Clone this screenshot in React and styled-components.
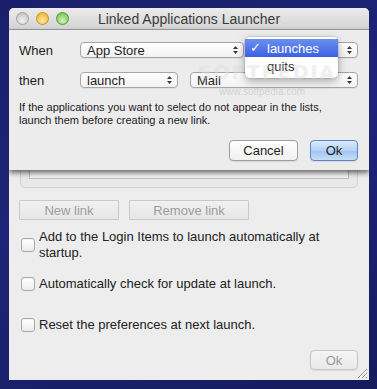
import React from "react";
import styled, { createGlobalStyle } from "styled-components";

const Global = createGlobalStyle`
  html, body { margin: 0; padding: 0; }
  body {
    width: 377px;
    height: 389px;
    overflow: hidden;
    background: #1b2070;
    font-family: "Liberation Sans", Arial, sans-serif;
  }
`;

const Desktop = styled.div`
  width: 377px;
  height: 389px;
  box-sizing: border-box;
  padding: 8px 8px 0 9px;
  background: linear-gradient(160deg, #1a1f6a 0%, #1e2578 45%, #161b5c 100%);
`;

const Window = styled.div`
  position: relative;
  width: 360px;
  height: 372px;
  background: #ededed;
  border-radius: 5px 5px 0 0;
  overflow: hidden;
  display: flex;
  flex-direction: column;
`;

const TitleBar = styled.div`
  flex: none;
  height: 21px;
  display: grid;
  grid-template-columns: 1fr auto 1fr;
  align-items: center;
  background: linear-gradient(#ececec, #d3d3d3);
  border-bottom: 1px solid #9b9b9b;
`;

const Lights = styled.div`
  display: flex;
  gap: 7px;
  padding-left: 7px;
`;

const lightColors = {
  gray: ["#f2f2f2", "#c8c8c8", "#a2a2a2"],
  yellow: ["#fde9a8", "#f3b93a", "#c98f24"],
  green: ["#d3f2bd", "#7fcb5c", "#4f9a3a"],
};

const Light = styled.span`
  box-sizing: border-box;
  width: 13px;
  height: 13px;
  border-radius: 50%;
  border: 1px solid ${(p) => lightColors[p.$c][2]};
  background: radial-gradient(circle at 50% 70%, ${(p) => lightColors[p.$c][0]} 0%, ${(p) => lightColors[p.$c][1]} 75%);
`;

const Title = styled.div`
  font-size: 14px;
  color: #3b3b3b;
  white-space: nowrap;
`;

const Content = styled.div`
  flex: 1;
  display: flex;
  flex-direction: column;
  padding: 11px 11px 10px 10px;
`;

const GroupBox = styled.div`
  box-sizing: border-box;
  margin-left: 1px;
  width: 338px;
  height: 147px;
  border: 1px solid #d0d0d0;
  border-radius: 5px;
  background: #e9e9e9;
  padding: 8px;
  display: flex;
`;

const Table = styled.div`
  flex: 1;
  border: 1px solid #bdbdbd;
  background: #f3f3f3;
`;

const ButtonRow = styled.div`
  display: flex;
  gap: 10px;
  margin-top: 12px;
`;

const FlatButton = styled.div`
  box-sizing: border-box;
  width: ${(p) => p.$w}px;
  height: 20px;
  display: flex;
  align-items: center;
  justify-content: center;
  border: 1px solid #c9c9c9;
  border-radius: 1px;
  background: linear-gradient(#f1f1f1, #e6e6e6);
  color: #9c9c9c;
  font-size: 13px;
`;

const CheckRow = styled.label`
  display: flex;
  align-items: center;
  gap: 4px;
  padding-left: 2px;
  margin-top: ${(p) => p.$mt}px;
  font-size: 13px;
  line-height: 16px;
  color: #222;
`;

const Box = styled.span`
  flex: none;
  box-sizing: border-box;
  width: 14px;
  height: 14px;
  border: 1px solid #a9a9a9;
  border-radius: 3px;
  background: linear-gradient(#ffffff, #ececec);
  box-shadow: inset 0 1px 1px rgba(0, 0, 0, 0.05);
`;

const CheckText = styled.span`
  width: 318px;
`;

const Footer = styled.div`
  display: flex;
  justify-content: flex-end;
  margin-top: 17px;
`;

const PushButton = styled.div`
  box-sizing: border-box;
  width: ${(p) => p.$w}px;
  height: ${(p) => p.$h}px;
  display: flex;
  align-items: center;
  justify-content: center;
  border-radius: 4px;
  font-size: 13px;
  border: 1px solid ${(p) => (p.$kind === "default" ? "#5f86c4" : p.$kind === "disabled" ? "#c6c6c6" : "#9f9f9f")};
  color: ${(p) => (p.$kind === "disabled" ? "#9a9a9a" : "#1e1e1e")};
  background: ${(p) =>
    p.$kind === "default"
      ? "linear-gradient(#dceafb 0%, #b5d3f5 50%, #9fc4f0 51%, #c6def8 100%)"
      : p.$kind === "disabled"
      ? "linear-gradient(#f4f4f4, #e9e9e9)"
      : "linear-gradient(#ffffff, #f0f0f0)"};
  box-shadow: 0 1px 1px rgba(0, 0, 0, 0.08);
`;

const Grip = styled.svg`
  position: absolute;
  right: 1px;
  bottom: 1px;
`;

/* ---------- sheet ---------- */

const Sheet = styled.div`
  position: absolute;
  top: 22px;
  left: 0;
  right: 0;
  height: 140px;
  box-sizing: border-box;
  padding: 12px 11px 9px 10px;
  background: #ececec;
  box-shadow: 0 3px 5px rgba(0, 0, 0, 0.55);
  display: flex;
  flex-direction: column;
  z-index: 2;
`;

const FormRow = styled.div`
  display: flex;
  align-items: center;
  height: 16px;
  margin-top: ${(p) => p.$mt || 0}px;
`;

const Label = styled.div`
  width: 61px;
  font-size: 13px;
  color: #1e1e1e;
`;

const PopupGroup = styled.div`
  display: flex;
  gap: 12px;
`;

const Popup = styled.div`
  box-sizing: border-box;
  width: ${(p) => p.$w}px;
  height: 16px;
  display: flex;
  align-items: center;
  justify-content: space-between;
  padding: 0 4px 0 6px;
  border: 1px solid #a6a6a6;
  border-radius: 4px;
  background: linear-gradient(#ffffff, #f2f2f2);
  font-size: 13px;
  color: #1e1e1e;
  box-shadow: 0 1px 0 rgba(0, 0, 0, 0.05);
`;

const Info = styled.p`
  margin: 13px 0 0;
  font-size: 11px;
  line-height: 13px;
  color: #222;
`;

const SheetButtons = styled.div`
  display: flex;
  justify-content: flex-end;
  gap: 12px;
  margin-top: 13px;
`;

const Menu = styled.div`
  position: absolute;
  left: 236px;
  top: 7px;
  width: 93px;
  box-sizing: border-box;
  padding: 2px 0 3px;
  background: rgba(255, 255, 255, 0.98);
  border-radius: 5px;
  box-shadow: 0 3px 9px rgba(0, 0, 0, 0.35), 0 0 0 1px rgba(0, 0, 0, 0.08);
  z-index: 3;
`;

const MenuItem = styled.div`
  position: relative;
  height: 18px;
  display: flex;
  align-items: center;
  padding-left: 22px;
  font-size: 13px;
  color: ${(p) => (p.$active ? "#fff" : "#1e1e1e")};
  background: ${(p) => (p.$active ? "linear-gradient(#6b8ff2, #3c61e0)" : "transparent")};
`;

const Check = styled.span`
  position: absolute;
  left: 5px;
  top: 0;
  line-height: 18px;
  font-family: "DejaVu Sans", sans-serif;
  font-weight: bold;
  font-size: 13px;
`;

const Watermark = styled.div`
  position: absolute;
  left: 189px;
  top: 31px;
  font-family: "DejaVu Sans", sans-serif;
  font-weight: bold;
  font-size: 19px;
  letter-spacing: 2px;
  color: rgba(255, 255, 255, 0.28);
  text-shadow: 0 0 1px rgba(150, 150, 150, 0.2);
  z-index: 4;
  pointer-events: none;
`;

const WatermarkUrl = styled.div`
  position: absolute;
  left: 210px;
  top: 56px;
  font-size: 10px;
  color: rgba(175, 175, 175, 0.45);
  z-index: 4;
  pointer-events: none;
`;

const Arrows = () => (
  <svg width="7" height="10" viewBox="0 0 7 10">
    <path d="M1 4 L3.5 1 L6 4 Z M1 6 L3.5 9 L6 6 Z" fill="#3a3a3a" />
  </svg>
);

export default function App() {
  return (
    <Desktop>
      <Global />
      <Window>
        <TitleBar>
          <Lights>
            <Light $c="gray" />
            <Light $c="yellow" />
            <Light $c="green" />
          </Lights>
          <Title>Linked Applications Launcher</Title>
          <div />
        </TitleBar>

        <Content>
          <GroupBox>
            <Table />
          </GroupBox>
          <ButtonRow>
            <FlatButton $w={100}>New link</FlatButton>
            <FlatButton $w={120}>Remove link</FlatButton>
          </ButtonRow>
          <CheckRow $mt={9}>
            <Box />
            <CheckText>Add to the Login Items to launch automatically at startup.</CheckText>
          </CheckRow>
          <CheckRow $mt={15}>
            <Box />
            <CheckText>Automatically check for update at launch.</CheckText>
          </CheckRow>
          <CheckRow $mt={25}>
            <Box />
            <CheckText>Reset the preferences at next launch.</CheckText>
          </CheckRow>
          <Footer>
            <PushButton $kind="disabled" $w={48} $h={20}>Ok</PushButton>
          </Footer>
        </Content>

        <Grip width="12" height="12" viewBox="0 0 12 12">
          <path d="M11 2 L2 11 M11 6 L6 11 M11 10 L10 11" stroke="#8e8e8e" strokeWidth="1" />
          <path d="M11 3 L3 11 M11 7 L7 11" stroke="#ffffff" strokeWidth="1" />
        </Grip>

        <Sheet>
          <FormRow>
            <Label>When</Label>
            <PopupGroup>
              <Popup $w={164}>
                <span>App Store</span>
                <Arrows />
              </Popup>
              <Popup $w={102}>
                <span>launches</span>
                <Arrows />
              </Popup>
            </PopupGroup>
          </FormRow>
          <FormRow $mt={14}>
            <Label>then</Label>
            <PopupGroup>
              <Popup $w={98}>
                <span>launch</span>
                <Arrows />
              </Popup>
              <Popup $w={168}>
                <span>Mail</span>
                <Arrows />
              </Popup>
            </PopupGroup>
          </FormRow>
          <Info>
            If the applications you want to select do not appear in the lists,
            <br />
            launch them before creating a new link.
          </Info>
          <SheetButtons>
            <PushButton $w={69} $h={21}>Cancel</PushButton>
            <PushButton $kind="default" $w={48} $h={21}>Ok</PushButton>
          </SheetButtons>

          <Menu>
            <MenuItem $active>
              <Check>✓</Check>
              launches
            </MenuItem>
            <MenuItem>quits</MenuItem>
          </Menu>
          <Watermark>SOFTPEDIA</Watermark>
          <WatermarkUrl>www.softpedia.com</WatermarkUrl>
        </Sheet>
      </Window>
    </Desktop>
  );
}
